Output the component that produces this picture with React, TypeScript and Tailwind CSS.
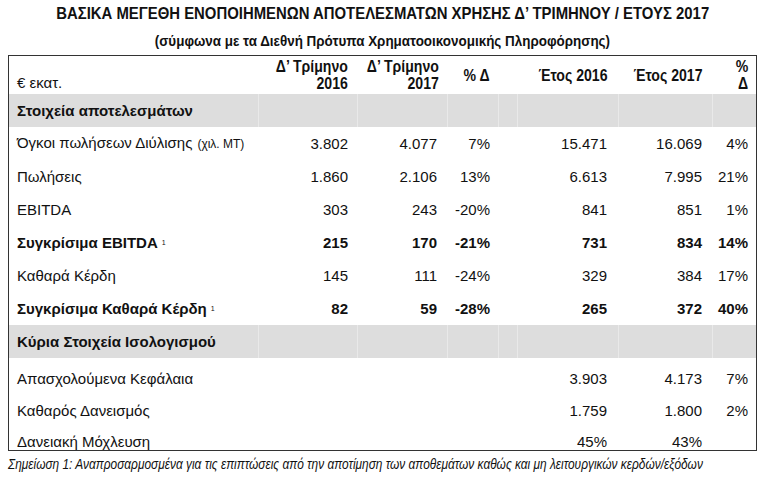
import React from 'react';

const cols = 'grid grid-cols-[249px_99px_90px_51px_19px_101px_94px_44px]';

type DataRow = {
  label: string;
  small?: string;
  note?: boolean;
  bold?: boolean;
  v: string[];
};

const results: DataRow[] = [
  { label: 'Όγκοι πωλήσεων Διύλισης', small: '(χιλ. ΜΤ)', v: ['3.802', '4.077', '7%', '15.471', '16.069', '4%'] },
  { label: 'Πωλήσεις', v: ['1.860', '2.106', '13%', '6.613', '7.995', '21%'] },
  { label: 'EBITDA', v: ['303', '243', '-20%', '841', '851', '1%'] },
  { label: 'Συγκρίσιμα EBITDA', note: true, bold: true, v: ['215', '170', '-21%', '731', '834', '14%'] },
  { label: 'Καθαρά Κέρδη', v: ['145', '111', '-24%', '329', '384', '17%'] },
  { label: 'Συγκρίσιμα Καθαρά Κέρδη', note: true, bold: true, v: ['82', '59', '-28%', '265', '372', '40%'] },
];

const balance: DataRow[] = [
  { label: 'Απασχολούμενα Κεφάλαια', v: ['', '', '', '3.903', '4.173', '7%'] },
  { label: 'Καθαρός Δανεισμός', v: ['', '', '', '1.759', '1.800', '2%'] },
  { label: 'Δανειακή Μόχλευση', v: ['', '', '', '45%', '43%', ''] },
];

function Row({ row, className }: { row: DataRow; className: string }) {
  const [a, b, c, d, e, f] = row.v;
  return (
    <div className={`${cols} ${className} ${row.bold ? 'font-bold' : ''}`}>
      <div className="pl-[8px] whitespace-nowrap">
        {row.label}
        {row.small && <span className="text-[12px] ml-[5px]">{row.small}</span>}
        {row.note && <sup className="text-[7px] ml-[4px] font-normal">1</sup>}
      </div>
      <div className="text-right pr-[9px]">{a}</div>
      <div className="text-right pr-[10px]">{b}</div>
      <div className="text-right pr-[8px]">{c}</div>
      <div />
      <div className="text-right pr-[11px]">{d}</div>
      <div className="text-right pr-[10px]">{e}</div>
      <div className="text-right pr-[8px]">{f}</div>
    </div>
  );
}

function Section({ title }: { title: string }) {
  return (
    <div className={`${cols} h-[33px] bg-[#dddddd] font-bold items-stretch`}>
      <div className="pl-[8px] flex items-center">{title}</div>
      <div className="border-l border-[#e9e9e9]" />
      <div className="border-l border-[#e9e9e9]" />
      <div className="border-l border-[#e9e9e9]" />
      <div className="border-l border-[#e9e9e9]" />
      <div className="border-l border-[#e9e9e9]" />
      <div className="border-l border-[#e9e9e9]" />
      <div className="border-l border-[#e9e9e9]" />
    </div>
  );
}

// header cell: bold text squeezed to look like a narrow face
function Head({ children, pr }: { children: React.ReactNode; pr: string }) {
  return (
    <div className={`text-right font-bold text-[16px] whitespace-nowrap ${pr}`}>
      <span className="inline-block scale-x-[0.88] origin-right">{children}</span>
    </div>
  );
}

export default function App() {
  return (
    <div className="w-[765px] h-[489px] bg-white text-[#111] font-['Liberation_Sans',Arial,sans-serif] text-[15px] overflow-hidden">
      <div className="font-bold text-center whitespace-nowrap">
        <div className="pt-[4px] h-[24px] leading-[20px] text-[17px]">
          <span className="inline-block scale-x-[0.876]">
            ΒΑΣΙΚΑ ΜΕΓΕΘΗ ΕΝΟΠΟΙΗΜΕΝΩΝ ΑΠΟΤΕΛΕΣΜΑΤΩΝ ΧΡΗΣΗΣ Δ’ ΤΡΙΜΗΝΟΥ / ΕΤΟΥΣ 2017
          </span>
        </div>
        <div className="mt-[8px] h-[18px] leading-[18px] text-[15px]">
          <span className="inline-block scale-x-[0.895]">
            (σύμφωνα με τα Διεθνή Πρότυπα Χρηματοοικονομικής Πληροφόρησης)
          </span>
        </div>
      </div>

      <div className="ml-[8px] mt-[5px] w-[749px] border-x border-t border-[#333] leading-[17px]">
        <div className={`${cols} h-[38px] items-center`}>
          <div className="pl-[8px] self-end pb-[3px]">€ εκατ.</div>
          <Head pr="pr-[9px]">Δ’ Τρίμηνο<br />2016</Head>
          <Head pr="pr-[10px]">Δ’ Τρίμηνο<br />2017</Head>
          <Head pr="pr-[8px]">% Δ</Head>
          <div />
          <Head pr="pr-[11px]">Έτος 2016</Head>
          <Head pr="pr-[10px]">Έτος 2017</Head>
          <Head pr="pr-[8px]">%<br />Δ</Head>
        </div>

        <Section title="Στοιχεία αποτελεσμάτων" />
        {results.map((r) => (
          <Row key={r.label} row={r} className="h-[33px] items-center" />
        ))}
        <Section title="Κύρια Στοιχεία Ισολογισμού" />
        <div className="h-[4px]" />
        <Row row={balance[0]} className="h-[32px] items-center" />
        <Row row={balance[1]} className="h-[32px] items-center" />
        <Row row={balance[2]} className="h-[24px] items-start pt-[7px]" />
      </div>
      <div className="ml-[8px] w-[749px] border-t border-[#333]" />

      <div className="italic text-[14px] pl-[8px] mt-[5px] leading-[16px] whitespace-nowrap">
        <span className="inline-block scale-x-[0.85] origin-left">
          Σημείωση 1: Αναπροσαρμοσμένα για τις επιπτώσεις από την αποτίμηση των αποθεμάτων καθώς και μη λειτουργικών κερδών/εξόδων
        </span>
      </div>
    </div>
  );
}
